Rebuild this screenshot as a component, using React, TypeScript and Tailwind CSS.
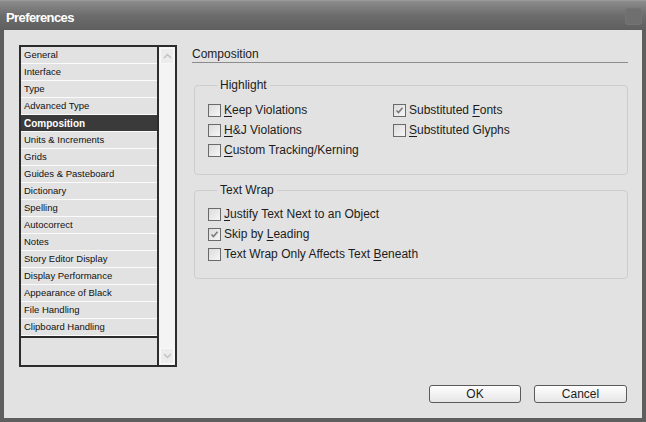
import React from "react";

const items = [
  "General",
  "Interface",
  "Type",
  "Advanced Type",
  "Composition",
  "Units & Increments",
  "Grids",
  "Guides & Pasteboard",
  "Dictionary",
  "Spelling",
  "Autocorrect",
  "Notes",
  "Story Editor Display",
  "Display Performance",
  "Appearance of Black",
  "File Handling",
  "Clipboard Handling",
];

function Box({ checked }: { checked?: boolean }) {
  return (
    <span className="w-[13px] h-[13px] shrink-0 border border-[#6a6a6a] bg-gradient-to-br from-[#dcdcdc] to-[#f6f6f6] flex items-center justify-center">
      {checked && (
        <svg width="9" height="9" viewBox="0 0 9 9">
          <path d="M1.5 4.5 L3.5 6.5 L7.5 1.8" fill="none" stroke="#7a7a7a" strokeWidth="1.6" />
        </svg>
      )}
    </span>
  );
}

function Check({
  checked,
  pre,
  u,
  post,
}: {
  checked?: boolean;
  pre?: string;
  u: string;
  post: string;
}) {
  return (
    <div className="h-[20px] flex items-center gap-[3px]">
      <Box checked={checked} />
      <span className="whitespace-nowrap">
        {pre}
        <span className="underline underline-offset-2">{u}</span>
        {post}
      </span>
    </div>
  );
}

export default function App() {
  return (
    <div
      className="w-[646px] h-[422px] flex flex-col bg-[#5e5e5e] text-[#1c1c1c]"
      style={{ fontFamily: '"Liberation Sans", Arial, sans-serif' }}
    >
      <div className="h-[30px] shrink-0 flex items-center justify-between px-[6px] bg-gradient-to-b from-[#8c8c8c] via-[#6c6c6c] to-[#5f5f5f] border-t border-[#9a9a9a]">
        <span className="text-white font-bold text-[13px] tracking-[-0.6px] mt-[4px]">
          Preferences
        </span>
        <span className="w-[17px] h-[17px] rounded-[3px] bg-[#6f6f6f] border border-[#747474] mr-[-2px] mt-[2px]" />
      </div>
      <div className="flex-1 mx-[4px] mb-[4px] bg-[#e2e2e2] flex pl-[15px] pt-[15px]">
        <div className="w-[158px] h-[322px] border-2 border-[#2c2c2c] flex bg-[#e2e2e2]">
          <div className="w-[138px] border-r-2 border-[#2c2c2c] flex flex-col">
            <div className="border-b-2 border-[#2c2c2c]">
              {items.map((it) => {
                const sel = it === "Composition";
                return (
                  <div
                    key={it}
                    className={
                      "h-[17px] border-b border-[#fbfbfb] pl-[3px] flex items-center whitespace-nowrap " +
                      (sel
                        ? "bg-[#3a3a3a] text-white font-bold text-[10px]"
                        : "bg-[#e2e2e2] text-[9.5px] text-[#111]")
                    }
                  >
                    {it}
                  </div>
                );
              })}
            </div>
          </div>
          <div className="flex-1 bg-[#f4f4f4] flex flex-col justify-between">
            <div className="h-[16px] m-[1px] bg-[#ececec] border border-[#f8f8f8] flex items-center justify-center">
              <svg width="9" height="6" viewBox="0 0 9 6">
                <path d="M1 5 L4.5 1.5 L8 5" fill="none" stroke="#c2c2c2" strokeWidth="1.5" />
              </svg>
            </div>
            <div className="h-[16px] m-[1px] bg-[#ececec] border border-[#f8f8f8] flex items-center justify-center">
              <svg width="9" height="6" viewBox="0 0 9 6">
                <path d="M1 1 L4.5 4.5 L8 1" fill="none" stroke="#c2c2c2" strokeWidth="1.5" />
              </svg>
            </div>
          </div>
        </div>
        <div className="ml-[15px] w-[436px] flex flex-col text-[12px]">
          <div className="h-[18px] leading-[18px] border-b border-[#8c8c8c]">Composition</div>
          <fieldset className="mt-[15px] ml-[2px] h-[97px] border border-[#cdcdcd] rounded-[4px] pl-[13px] pt-[8px]">
            <legend className="ml-[9px] px-[3px] leading-[14px]">Highlight</legend>
            <div className="grid grid-cols-[185px_1fr]">
              <Check u="K" post="eep Violations" />
              <Check checked pre="Substituted " u="F" post="onts" />
              <Check u="H" post="&J Violations" />
              <Check u="S" post="ubstituted Glyphs" />
              <Check u="C" post="ustom Tracking/Kerning" />
            </div>
          </fieldset>
          <fieldset className="mt-[8px] ml-[2px] h-[96px] border border-[#cdcdcd] rounded-[4px] pl-[13px] pt-[7px]">
            <legend className="ml-[9px] px-[3px] leading-[14px]">Text Wrap</legend>
            <Check u="J" post="ustify Text Next to an Object" />
            <Check checked pre="Skip by " u="L" post="eading" />
            <Check pre="Text Wrap Only Affects Text " u="B" post="eneath" />
          </fieldset>
          <div className="mt-auto mb-[15px] flex justify-end gap-[13px] pr-[1px]">
            <button className="w-[92px] h-[18px] rounded-[3px] border border-[#5a5a5a] bg-gradient-to-b from-[#ffffff] to-[#e6e6e6] text-[12px] leading-none">
              OK
            </button>
            <button className="w-[93px] h-[18px] rounded-[3px] border border-[#5a5a5a] bg-gradient-to-b from-[#ffffff] to-[#e6e6e6] text-[12px] leading-none">
              Cancel
            </button>
          </div>
        </div>
      </div>
    </div>
  );
}
